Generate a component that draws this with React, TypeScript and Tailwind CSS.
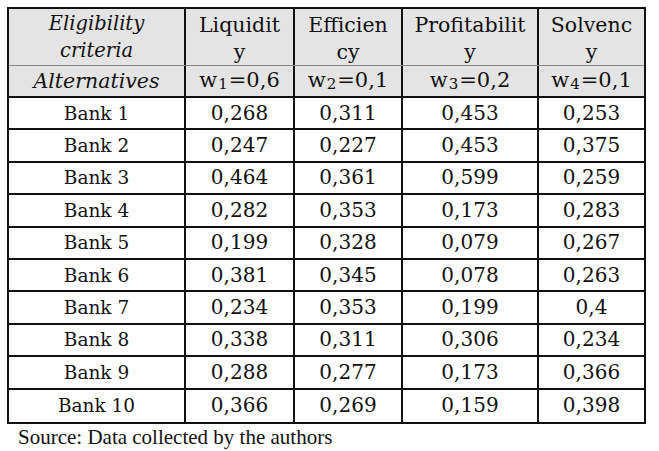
import React from "react";

const rows: [string, string, string, string, string][] = [
  ["Bank 1", "0,268", "0,311", "0,453", "0,253"],
  ["Bank 2", "0,247", "0,227", "0,453", "0,375"],
  ["Bank 3", "0,464", "0,361", "0,599", "0,259"],
  ["Bank 4", "0,282", "0,353", "0,173", "0,283"],
  ["Bank 5", "0,199", "0,328", "0,079", "0,267"],
  ["Bank 6", "0,381", "0,345", "0,078", "0,263"],
  ["Bank 7", "0,234", "0,353", "0,199", "0,4"],
  ["Bank 8", "0,338", "0,311", "0,306", "0,234"],
  ["Bank 9", "0,288", "0,277", "0,173", "0,366"],
  ["Bank 10", "0,366", "0,269", "0,159", "0,398"],
];

const cols = ["w-[177px]", "w-[109px]", "w-[108px]", "w-[136px]", "w-[109px]"];

function W({ n, v }: { n: string; v: string }) {
  return (
    <span>
      w<span className="text-[15px] relative top-[2px] mx-[1px]">{n}</span>={v}
    </span>
  );
}

export default function App() {
  return (
    <div
      className="w-[659px] h-[451px] bg-white pl-[7px] pt-[7px] text-[#111]"
      style={{ fontFamily: '"DejaVu Serif", serif' }}
    >
      <div className="w-[639px] border-2 border-[#111] text-[20.5px] leading-[27px]">
        <div className="flex h-[56px] bg-[#e4e4e4] pt-[3px]">
          <div className={`${cols[0]} shrink-0 flex flex-col items-center justify-center italic text-[19.5px] border-r-2 border-[#111] -mt-[3px]`}>
            <span>Eligibility</span>
            <span>criteria</span>
          </div>
          <div className={`${cols[1]} shrink-0 flex flex-col items-center justify-center border-r-2 border-[#111] -mt-[3px] pt-[3px]`}>
            <span>Liquidit</span>
            <span>y</span>
          </div>
          <div className={`${cols[2]} shrink-0 flex flex-col items-center justify-center border-r-2 border-[#111] -mt-[3px] pt-[3px]`}>
            <span>Efficien</span>
            <span>cy</span>
          </div>
          <div className={`${cols[3]} shrink-0 flex flex-col items-center justify-center border-r-2 border-[#111] -mt-[3px] pt-[3px]`}>
            <span>Profitabilit</span>
            <span>y</span>
          </div>
          <div className="flex-1 flex flex-col items-center justify-center -mt-[3px] pt-[3px]">
            <span>Solvenc</span>
            <span>y</span>
          </div>
        </div>
        <div className="flex h-[33px] bg-[#e4e4e4] border-t border-[#888] border-b-2 border-b-[#111] text-[21px]">
          <div className={`${cols[0]} shrink-0 flex items-center justify-center italic text-[20.5px] border-r-2 border-[#111]`}>
            Alternatives
          </div>
          <div className={`${cols[1]} shrink-0 flex items-center justify-center border-r-2 border-[#111]`}>
            <W n="1" v="0,6" />
          </div>
          <div className={`${cols[2]} shrink-0 flex items-center justify-center border-r-2 border-[#111]`}>
            <W n="2" v="0,1" />
          </div>
          <div className={`${cols[3]} shrink-0 flex items-center justify-center border-r-2 border-[#111]`}>
            <W n="3" v="0,2" />
          </div>
          <div className="flex-1 flex items-center justify-center">
            <W n="4" v="0,1" />
          </div>
        </div>
        {rows.map((r, i) => (
          <div
            key={r[0]}
            className={`flex h-[32.4px] ${i < rows.length - 1 ? "border-b-2 border-[#111]" : ""}`}
          >
            {r.map((c, j) => (
              <div
                key={j}
                className={`${j < 4 ? `${cols[j]} shrink-0 border-r-2 border-[#111]` : "flex-1"} flex items-center justify-center ${j === 0 ? "text-[18.5px]" : "text-[20px]"}`}
              >
                {c}
              </div>
            ))}
          </div>
        ))}
      </div>
      <div
        className="pl-[11px] text-[21px] leading-[22px] mt-[2px]"
        style={{ fontFamily: '"Liberation Serif", serif' }}
      >
        Source: Data collected by the authors
      </div>
    </div>
  );
}
